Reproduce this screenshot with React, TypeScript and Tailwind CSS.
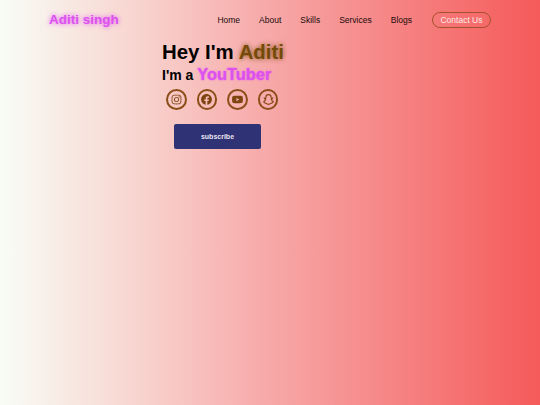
import { BiLogoInstagram, BiLogoFacebookCircle, BiLogoYoutube } from 'react-icons/bi';
import { TbBrandSnapchat } from 'react-icons/tb';

const links = ['Home', 'About', 'Skills', 'Services', 'Blogs'];

function App() {
  return (
    <div className="min-h-[405px] bg-[linear-gradient(to_right,#f8fdf6_0%,#f8d5d0_25%,#f7a8a8_50%,#f55a5a_100%)] font-['Liberation_Sans',Arial,sans-serif] text-black">
      {/* Header */}
      <header className="flex h-[40px] items-center pr-[49px] pl-[49px]">
        <div className="text-[13.5px] font-bold text-[#dd50f0] [text-shadow:0_0_5px_#dd50f0]">Aditi singh</div>
        <nav className="ml-auto flex items-center gap-[19px] text-[8.5px] text-[#1a0a0a]">
          {links.map(l => (
            <a key={l}>{l}</a>
          ))}
          <a className="ml-[1px] flex h-[16px] w-[59px] items-center justify-center rounded-full border border-[#a5522a] text-[#ffe9e6]">
            Contact Us
          </a>
        </nav>
      </header>

      {/* Hero */}
      <section className="ml-[162px] flex flex-col">
        <h1 className="text-[20.4px] leading-[24px] font-bold">
          Hey I'm <span className="text-[#744a08] [text-shadow:0_0_5px_#7f5310]">Aditi</span>
        </h1>
        <h3 className="text-[14px] leading-[21px] font-bold">
          I'm a <span className="text-[16.4px] text-[#dd50f0] [text-shadow:0_0_2px_#dd50f0]">YouTuber</span>
        </h3>
        <div className="mt-[3px] ml-[4px] flex gap-[10px] text-[#7f4510]">
          <span className="flex h-[21px] w-[20.6px] items-center justify-center rounded-full border-[2px] border-[#8c4e18]"><BiLogoInstagram size={13} /></span>
          <span className="flex h-[21px] w-[20.6px] items-center justify-center rounded-full border-[2px] border-[#8c4e18]"><BiLogoFacebookCircle size={13} /></span>
          <span className="flex h-[21px] w-[20.6px] items-center justify-center rounded-full border-[2px] border-[#8c4e18]"><BiLogoYoutube size={13} /></span>
          <span className="flex h-[21px] w-[20.6px] items-center justify-center rounded-full border-[2px] border-[#8c4e18]"><TbBrandSnapchat size={13} /></span>
        </div>
        <button className="mt-[14px] ml-[12px] h-[25px] w-[87px] rounded-[2px] bg-[#2f3275] pt-[1px] text-[7px] font-bold text-[#e8e4f0]">
          subscribe
        </button>
      </section>
    </div>
  );
}

export default App;
